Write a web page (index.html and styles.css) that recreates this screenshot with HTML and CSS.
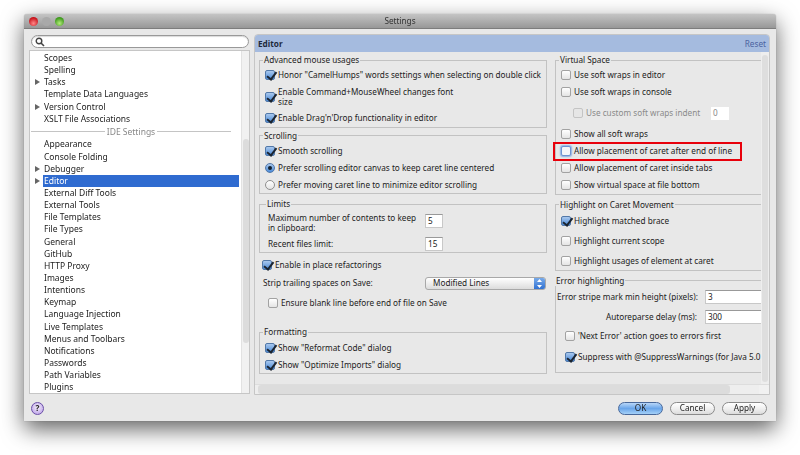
FILE: index.html
```html
<!DOCTYPE html>
<html lang="en">
<head>
<meta charset="utf-8">
<title>Settings</title>
<link rel="stylesheet" href="styles.css">
</head>
<body>
<div class="window">
  <div class="titlebar">
    <div class="lights"><span class="light red"></span><span class="light grey"></span><span class="light green"></span></div>
    <div class="title">Settings</div>
  </div>
  <div class="main">
    <aside class="sidebar">
      <div class="search">
        <svg class="search-icon" width="10" height="10" viewBox="0 0 10 10"><circle cx="4" cy="4" r="2.8" fill="none" stroke="#444" stroke-width="1.4"/><path d="M6 6l3 3" stroke="#444" stroke-width="1.6"/></svg>
      </div>
      <div class="tree">
        <ul class="tree-list">
          <li>Scopes</li>
          <li>Spelling</li>
          <li class="arrow">Tasks</li>
          <li>Template Data Languages</li>
          <li class="arrow">Version Control</li>
          <li>XSLT File Associations</li>
          <li class="sep"><span>IDE Settings</span></li>
          <li>Appearance</li>
          <li>Console Folding</li>
          <li class="arrow">Debugger</li>
          <li class="arrow selected">Editor</li>
          <li>External Diff Tools</li>
          <li>External Tools</li>
          <li>File Templates</li>
          <li>File Types</li>
          <li>General</li>
          <li>GitHub</li>
          <li>HTTP Proxy</li>
          <li>Images</li>
          <li>Intentions</li>
          <li>Keymap</li>
          <li>Language Injection</li>
          <li>Live Templates</li>
          <li>Menus and Toolbars</li>
          <li>Notifications</li>
          <li>Passwords</li>
          <li>Path Variables</li>
          <li>Plugins</li>
        </ul>
        <div class="tree-scroll"><div class="tree-thumb"></div></div>
      </div>
    </aside>
    <section class="panel">
      <header class="panel-head"><strong>Editor</strong><span class="reset">Reset</span></header>
      <div class="panel-mid">
        <div class="scroll-area">
          <div class="col-left">
            <fieldset class="adv">
              <legend>Advanced mouse usages</legend>
              <div class="row"><span class="cb on"></span>Honor "CamelHumps" words settings when selecting on double click</div>
              <div class="row tall"><span class="cb on"></span><span class="wrap">Enable Command+MouseWheel changes font<br>size</span></div>
              <div class="row"><span class="cb on"></span>Enable Drag'n'Drop functionality in editor</div>
            </fieldset>
            <fieldset class="scrolling">
              <legend>Scrolling</legend>
              <div class="row"><span class="cb on"></span>Smooth scrolling</div>
              <div class="row"><span class="rb on"></span>Prefer scrolling editor canvas to keep caret line centered</div>
              <div class="row"><span class="rb"></span>Prefer moving caret line to minimize editor scrolling</div>
            </fieldset>
            <fieldset class="limits">
              <legend>Limits</legend>
              <div class="limit-row top"><span class="wrap">Maximum number of contents to keep<br>in clipboard:</span><span class="field small">5</span></div>
              <div class="limit-row"><span>Recent files limit:</span><span class="field small">15</span></div>
            </fieldset>
            <div class="row refactor"><span class="cb on"></span>Enable in place refactorings</div>
            <div class="strip"><span>Strip trailing spaces on Save:</span>
              <div class="select"><span>Modified Lines</span>
                <span class="stepper"><svg width="7" height="11" viewBox="0 0 7 11"><path d="M3.5 1L6 4H1zM3.5 10L1 7h5z" fill="#fff"/></svg></span>
              </div>
            </div>
            <div class="row ensure"><span class="cb"></span>Ensure blank line before end of file on Save</div>
            <fieldset class="formatting">
              <legend>Formatting</legend>
              <div class="row"><span class="cb on"></span>Show "Reformat Code" dialog</div>
              <div class="row"><span class="cb on"></span>Show "Optimize Imports" dialog</div>
            </fieldset>
          </div>
          <div class="col-right">
            <fieldset class="virtual">
              <legend>Virtual Space</legend>
              <div class="row"><span class="cb"></span>Use soft wraps in editor</div>
              <div class="row"><span class="cb"></span>Use soft wraps in console</div>
              <div class="row indent disabled"><span class="cb"></span><span class="indent-label">Use custom soft wraps indent</span><span class="field zero">0</span></div>
              <div class="row"><span class="cb"></span>Show all soft wraps</div>
              <div class="row"><span class="cb focus"></span>Allow placement of caret after end of line</div>
              <div class="row"><span class="cb"></span>Allow placement of caret inside tabs</div>
              <div class="row"><span class="cb"></span>Show virtual space at file bottom</div>
            </fieldset>
            <fieldset class="highlight">
              <legend>Highlight on Caret Movement</legend>
              <div class="row"><span class="cb on"></span>Highlight matched brace</div>
              <div class="row"><span class="cb"></span>Highlight current scope</div>
              <div class="row"><span class="cb"></span>Highlight usages of element at caret</div>
            </fieldset>
            <fieldset class="errors">
              <legend>Error highlighting</legend>
              <div class="err-grid">
                <span class="err-label">Error stripe mark min height (pixels):</span><span class="field wide">3</span>
                <span class="err-label">Autoreparse delay (ms):</span><span class="field wide">300</span>
              </div>
              <div class="err-rows">
                <div class="row"><span class="cb"></span>'Next Error' action goes to errors first</div>
                <div class="row"><span class="cb on"></span>Suppress with @SuppressWarnings (for Java 5.0</div>
              </div>
            </fieldset>
          </div>
        </div>
        <div class="v-scroll"><div class="v-thumb"></div></div>
      </div>
      <div class="h-scroll"><div class="h-thumb"></div><div class="corner"></div></div>
    </section>
  </div>
  <footer class="footer">
    <span class="help">?</span>
    <div class="buttons"><span class="btn default">OK</span><span class="btn">Cancel</span><span class="btn">Apply</span></div>
  </footer>
  <div class="callout"></div>
</div>
</body>
</html>
```
FILE: styles.css
```css
* { box-sizing: border-box; }
html, body { margin: 0; height: 100%; background: #fff; overflow: hidden; }
body { padding: 14px 24px 0; font: 8.2px/10px "Noto Sans", sans-serif; color: #222; }
.window {
  position: relative; width: 752px; height: 407px; background: #e8e8e8;
  display: flex; flex-direction: column; border-radius: 3px 3px 0 0;
  box-shadow: 0 8px 22px rgba(0,0,0,.62), 0 0 1px rgba(0,0,0,.4);
  filter: blur(.4px);
}
.titlebar {
  height: 15px; background: linear-gradient(#c4c4c4, #989898); position: relative;
  display: flex; align-items: center; justify-content: center; border-bottom: 1px solid #7d7d7d;
  border-radius: 3px 3px 0 0;
}
.title { color: #333; }
.lights { position: absolute; left: 5px; top: 3px; display: flex; gap: 4px; }
.light { width: 9px; height: 9px; border-radius: 50%; }
.red { background: radial-gradient(circle at 50% 70%, #f88, #c8141c 70%); }
.grey { background: #a9a9a9; }
.green { background: radial-gradient(circle at 50% 70%, #b5ec7c, #3e9a1c 70%); }

.main { display: flex; height: 366px; }
.sidebar { width: 230px; padding: 6px 0 0 5px; flex: none; }
.search {
  width: 218px; height: 13px; margin-left: 2px; background: #fff; border: 1px solid #999; border-radius: 7px;
  display: flex; align-items: center; padding-left: 3px; box-shadow: inset 0 1px 1px rgba(0,0,0,.15);
}
.tree {
  display: flex; width: 221px; height: 344px; margin-top: 2px; background: #fff; border: 1px solid #c6c6c6; overflow: hidden; font-size: 8.5px;
}
.tree-list { list-style: none; margin: 0; padding: 1px 0 0; width: 211px; flex: none; }
.tree-list li { height: 12.15px; line-height: 12px; padding-left: 14px; position: relative; white-space: nowrap; }
.tree-list .arrow::before {
  content: ""; position: absolute; left: 5px; top: 3px;
  border-left: 5px solid #666; border-top: 3px solid transparent; border-bottom: 3px solid transparent;
}
.tree-list .selected { background: linear-gradient(#2f6bd0, #2f6bd0) no-repeat 13px 0 / 196px 100%; color: #fff; }
.tree-list .sep { display: flex; align-items: center; padding: 0 10px 0 1px; height: 13.6px; gap: 2px; color: #888; justify-content: center; }
.tree-list .sep::before, .tree-list .sep::after { content: ""; flex: 1; height: 1px; background: #c4c4c4; }
.tree-scroll { flex: 1; background: #f1f1f1; border-left: 1px solid #e2e2e2; padding: 88px 0 0 1px; }
.tree-thumb { height: 204px; background: #dcdcdc; border-radius: 3px; width: 6px; }

.panel { width: 516px; height: 361px; background: #e8e8e8; border: 1px solid #c6c6c6; border-radius: 4px 4px 0 0; display: flex; flex-direction: column; margin-top: 5px; overflow: hidden; }
.panel-head { height: 17px; flex: none; background: #a5bbdf; display: flex; justify-content: space-between; align-items: center; padding: 0 3px; color: #1e2a3c; }
.reset { color: #4c63a0; }
.panel-mid { display: flex; height: 332px; flex: none; }
.scroll-area { width: 506px; display: flex; gap: 8px; padding: 3px 0 0 4px; overflow: hidden; flex: none; }
.col-left { width: 288px; flex: none; }
.col-right { width: 206px; flex: none; overflow: hidden; }
.col-right fieldset { width: 226px; }

fieldset { margin: 0 0 5px; padding: 3.5px 4px 2px 5px; border: 1px solid #c2c2c2; display: flex; flex-direction: column; gap: 4px; }
legend { padding: 0 1px; margin-left: -2px; line-height: 10px; }
.row { display: flex; align-items: center; min-height: 13px; white-space: nowrap; }
.row.tall { min-height: 22px; }
.wrap { line-height: 10px; }
.cb {
  width: 10px; height: 10px; flex: none; margin-right: 3px; background: linear-gradient(#fff, #e4e4e4);
  border: 1px solid #a2a2a2; border-radius: 2px; position: relative;
}
.cb.on { background: linear-gradient(#a9c8ee, #4b8bd8); border-color: #5278a8; }
.cb.on::after {
  content: ""; position: absolute; left: 2.5px; top: -1px; width: 4px; height: 7.5px;
  border-right: 2px solid #1b2430; border-bottom: 2px solid #1b2430; transform: rotate(38deg);
}
.cb.focus { border-color: #6e94d0; box-shadow: 0 0 1.5px 1px #8cb0e6; background: #f4f6fa; }
.rb {
  width: 10px; height: 10px; flex: none; margin-right: 3px; border-radius: 50%; background: linear-gradient(#fff, #e4e4e4);
  border: 1px solid #8f8f8f; position: relative;
}
.rb.on { background: linear-gradient(#a9c8ee, #4b8bd8); border-color: #5278a8; }
.rb.on::after { content: ""; position: absolute; left: 2px; top: 2px; width: 4px; height: 4px; border-radius: 50%; background: #14202e; }
.field { background: #fff; border: 1px solid #c8c8c8; border-top-color: #999; padding-left: 2px; display: flex; align-items: center; flex: none; }
.field.small { width: 18px; height: 14px; }

.adv { margin-bottom: 3px; }
.limits { gap: 4px; padding: 4px 0 2px 8px; height: 54px; margin-bottom: 5px; }
.limit-row { display: flex; align-items: center; justify-content: space-between; width: 175px; }
.limit-row.top .field { margin-top: -4px; }
.refactor { padding-left: 3px; }
.strip { display: flex; justify-content: space-between; align-items: center; padding: 0 1px 0 4px; margin-top: 5px; height: 14px; }
.select {
  width: 121px; height: 13px; background: linear-gradient(#fff, #dcdcdc); border: 1px solid #a8a8a8; border-radius: 3px;
  padding-left: 7px; display: flex; justify-content: space-between; align-items: center; overflow: hidden;
}
.stepper { width: 11px; height: 13px; background: linear-gradient(#7fb0ec, #2a6cd0); display: flex; align-items: center; justify-content: center; }
.ensure { padding-left: 9px; margin-top: 6px; margin-bottom: 18px; }
.formatting { margin-bottom: 0; padding-top: 4px; }

.indent { padding-left: 12px; height: 21px; }
.indent .cb { background: #e6e6e6; border-color: #c4c4c4; }
.indent-label { color: #8a8a8a; width: 125px; }
.field.zero { width: 18px; height: 13px; border: 0; color: #888; }

.highlight { gap: 7px; height: 71px; padding-top: 5px; }
.errors { gap: 3px; padding: 4px 0 0 1px; height: 97px; }
.err-grid { display: grid; grid-template-columns: 140px 1fr; gap: 6px 8px; align-items: center; }
.err-label { text-align: right; white-space: nowrap; }
.field.wide { height: 14px; width: 70px; }
.err-rows { display: flex; flex-direction: column; gap: 8px; padding-left: 8px; margin-top: 3px; }

.v-scroll { flex: 1; background: #eee; padding: 3px 1px 0; }
.v-thumb { height: 327px; background: #dedede; border-radius: 3px; }
.h-scroll { height: 10px; flex: none; display: flex; background: #eee; padding-left: 3px; margin-top: 0; border-top: 1px solid #ddd; }
.h-thumb { width: 472px; background: #dcdcdc; border-radius: 3px; }
.corner { margin-left: auto; width: 10px; background: #f1f1f1; }

.footer { height: 26px; display: flex; justify-content: space-between; align-items: center; padding: 0 9px 0 7px; }
.help {
  width: 13px; height: 13px; border-radius: 50%; background: radial-gradient(circle at 50% 40%, #f4eefc, #b496e4); border: 1px solid #6a4fa6;
  display: flex; align-items: center; justify-content: center; font-weight: bold; color: #222;
}
.buttons { display: flex; gap: 7px; }
.btn {
  width: 45px; height: 13px; border: 1px solid #8a8a8a; border-radius: 7px; background: linear-gradient(#fff, #f0f0f0 50%, #dcdcdc);
  display: flex; align-items: center; justify-content: center;
}
.btn.default { background: linear-gradient(#b8d6f8, #6aa6ea 50%, #a4d0f8); border-color: #48689a; }
.callout { position: absolute; left: 529px; top: 128px; width: 189px; height: 19px; border: 2px solid #e8000b; }
```
